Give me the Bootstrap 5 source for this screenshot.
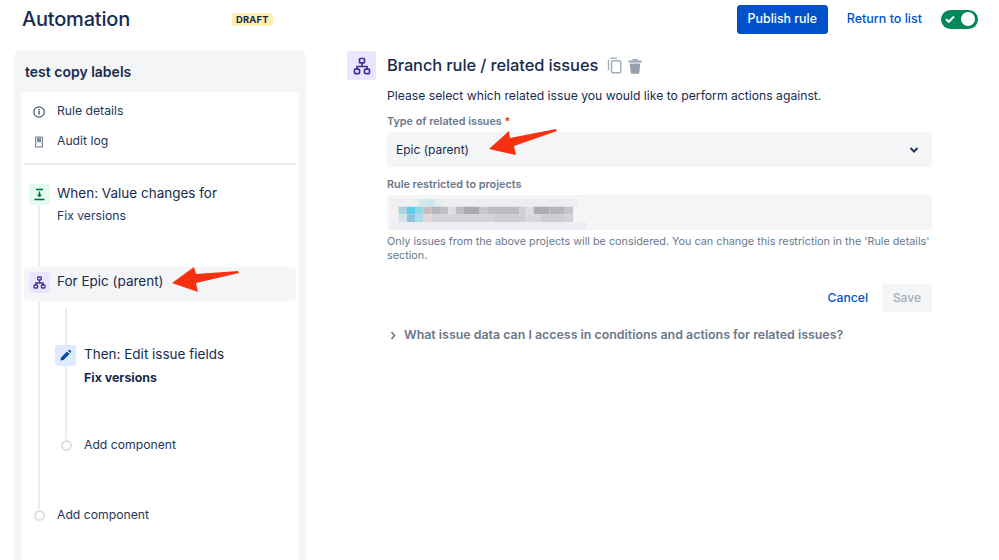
<!DOCTYPE html>
<html lang="en">
<head>
  <meta charset="UTF-8">
  <meta name="viewport" content="width=device-width, initial-scale=1.0">
  <title>Automation</title>
  <link href="https://cdn.jsdelivr.net/npm/bootstrap@5.3.3/dist/css/bootstrap.min.css" rel="stylesheet">
  <style>
    body { font-family: Inter, "Liberation Sans", sans-serif; color: #172b4d; height: 560px; overflow: hidden; position: relative; font-size: 12.2px; }
    .top-bar { height: 38px; padding: 0 21px 0 22px; }
    .page-title { font-size: 20px; font-weight: 500; line-height: 38px; margin: 0; width: 210px; letter-spacing: -.2px; }
    .draft-tag { background: #fff0b3; color: #172b4d; font-size: 9.4px; font-weight: 700; padding: 1px 4px; border-radius: 3px; letter-spacing: .2px; line-height: 11px; }
    .publish-btn { background: #0052cc; border-color: #0052cc; font-size: 12.4px; font-weight: 500; height: 29px; width: 91px; padding: 0; border-radius: 3px; }
    .back-link { color: #0052cc; font-size: 12.5px; font-weight: 500; text-decoration: none; margin: 0 19px; }
    .toggle-pill { width: 37px; height: 19px; border-radius: 10px; background: #00875a; padding: 0 3px; }
    .toggle-knob { width: 14px; height: 14px; background: #fff; border-radius: 50%; margin-left: auto; }
    .side-panel { width: 292px; margin: 13px 0 0 14px; height: 520px; background: #f4f5f7; border-radius: 6px; padding: 0 7px; flex: none; }
    .side-title { font-size: 14px; font-weight: 600; height: 41px; line-height: 41px; padding-left: 4px; }
    .side-card { background: #fff; border-radius: 6px; padding: 0 3px; height: 480px; position: relative; }
    .menu-row { height: 30px; padding-top: 9px; color: #253858; }
    .menu-row svg { margin: 0 12px 0 9px; flex: none; }
    .side-rule { height: 2px; background: #ebecf0; margin-top: 11px; }
    .step-icon { width: 21px; height: 21px; border-radius: 3px; flex: none; position: relative; z-index: 1; }
    .step-main { font-size: 13.5px; line-height: 18px; }
    .step-sub { line-height: 18px; margin-top: 5px; color: #253858; }
    .step-text { margin-left: 7px; }
    .step-when { padding: 19px 0 0 5px; height: 102px; }
    .step-branch { height: 34px; padding: 5px 0 0 5px; background: #f4f5f7; border-radius: 4px; position: relative; z-index: 1; }
    .step-then { padding: 44px 0 0 31px; height: 135px; }
    .then-sub { color: #172b4d; font-weight: 700; font-size: 12.4px; margin-top: 6px; }
    .step-add { color: #253858; height: 18px; }
    .add-inner { padding-left: 37px; }
    .add-outer { padding-left: 10px; margin-top: 52px; }
    .dot-mark { width: 11px; height: 11px; border: 2px solid #dfe1e6; border-radius: 50%; background: #fff; flex: none; position: relative; z-index: 1; margin-right: 12px; }
    .line-outer { position: absolute; left: 17px; top: 113px; width: 2px; height: 304px; background: #ebecf0; }
    .line-inner { position: absolute; left: 44px; top: 216px; width: 2px; height: 131px; background: #ebecf0; }
    .detail-pane { margin: 13px 0 0 41px; width: 585px; flex: none; }
    .head-icon { width: 29px; height: 29px; background: #eae6ff; border-radius: 3px; flex: none; margin-right: 11px; }
    .pane-title { font-size: 16.45px; font-weight: 500; margin: 0 9px 0 0; line-height: 29px; letter-spacing: -.1px; }
    .pane-body { padding-left: 40px; }
    .pane-intro { margin: 7px 0 0; line-height: 18px; color: #172b4d; }
    .field-label { font-size: 10.8px; font-weight: 600; color: #6b778c; margin: 10px 0 3px; line-height: 14px; display: block; }
    .field-label b { color: #de350b; font-weight: 600; }
    .field-box { background: #f4f5f7; border: 0; border-radius: 3px; height: 35px; padding: 1px 9px 0; font-size: 12px; color: #172b4d; }
    .field-help { font-size: 10.8px; color: #6b778c; line-height: 14px; margin-top: 5px; }
    .cancel-link { color: #0052cc; font-weight: 500; text-decoration: none; margin-right: 14px; }
    .btn.save-btn:disabled { background: #f4f5f7; color: #a5adba; border: 0; width: 50px; height: 28px; padding: 0; font-size: 12.2px; font-weight: 500; border-radius: 3px; opacity: 1; }
    .more-row { color: #6b778c; font-weight: 600; font-size: 12.4px; margin: 14px 0 0 3px; line-height: 18px; }
    .more-row svg { margin-right: 7px; }
    .arrow-mark { position: absolute; left: 0; top: 0; z-index: 5; pointer-events: none; }
  </style>
</head>
<body>
  <header class="top-bar d-flex align-items-center">
    <h1 class="page-title">Automation</h1>
    <span class="draft-tag">DRAFT</span>
    <button class="btn btn-primary publish-btn ms-auto" type="button">Publish rule</button>
    <a class="back-link" href="#">Return to list</a>
    <div class="toggle-pill d-flex align-items-center">
      <svg width="12" height="12" viewBox="0 0 12 12"><path d="M2 6.2l2.8 2.6L10 3.5" fill="none" stroke="#fff" stroke-width="2"/></svg>
      <div class="toggle-knob"></div>
    </div>
  </header>

  <div class="d-flex">
    <aside class="side-panel">
      <div class="side-title">test copy labels</div>
      <div class="side-card">
        <div class="menu-row d-flex align-items-center">
          <svg width="12" height="12" viewBox="0 0 12 12"><circle cx="6" cy="6" r="5.2" fill="none" stroke="#42526e" stroke-width="1.2"/><rect x="5.3" y="5" width="1.4" height="3.6" fill="#42526e"/><rect x="5.3" y="3" width="1.4" height="1.4" fill="#42526e"/></svg>
          Rule details
        </div>
        <div class="menu-row d-flex align-items-center">
          <svg width="12" height="12" viewBox="0 0 12 12"><rect x="2" y=".5" width="8" height="11" rx="1" fill="#7a869a"/><rect x="3.2" y="1.7" width="5.6" height="8.6" fill="#fff"/><rect x="4" y="2.2" width="4" height="4" fill="#7a869a"/></svg>
          Audit log
        </div>
        <div class="side-rule"></div>
        <div class="line-outer"></div>
        <div class="line-inner"></div>

        <div class="step-when d-flex">
          <div class="step-icon d-flex align-items-center justify-content-center" style="background:#e3fcef">
            <svg width="13" height="13" viewBox="0 0 13 13"><path d="M3 1.5h7M1.5 11.5h10" stroke="#006644" stroke-width="1.4"/><path d="M6.5 3.5v5" stroke="#006644" stroke-width="1.4"/><path d="M4 6.5h5l-2.5 2.8z" fill="#006644"/></svg>
          </div>
          <div class="step-text">
            <div class="step-main">When: Value changes for</div>
            <div class="step-sub">Fix versions</div>
          </div>
        </div>

        <div class="step-branch d-flex">
          <div class="step-icon d-flex align-items-center justify-content-center" style="background:#eae6ff">
            <svg width="13" height="13" viewBox="0 0 13 13"><g fill="none" stroke="#403294" stroke-width="1.3"><rect x="4.7" y="1" width="3.6" height="3" rx=".8"/><rect x="1" y="9" width="3.6" height="3" rx=".8"/><rect x="8.4" y="9" width="3.6" height="3" rx=".8"/><path d="M6.5 4v3M2.8 9V7h7.4v2"/></g></svg>
          </div>
          <div class="step-main step-text">For Epic (parent)</div>
        </div>

        <div class="step-then d-flex">
          <div class="step-icon d-flex align-items-center justify-content-center" style="background:#deebff">
            <svg width="13" height="13" viewBox="0 0 13 13"><path d="M1.5 11.5l.6-3 6-6 2.4 2.4-6 6z" fill="#0747a6"/><path d="M9 1.6l.7-.6a.8.8 0 0 1 1.1 0l1.2 1.2a.8.8 0 0 1 0 1.1l-.6.7z" fill="#0747a6"/></svg>
          </div>
          <div class="ms-2">
            <div class="step-main">Then: Edit issue fields</div>
            <div class="step-sub then-sub">Fix versions</div>
          </div>
        </div>

        <div class="step-add add-inner d-flex align-items-center"><span class="dot-mark"></span>Add component</div>
        <div class="step-add add-outer d-flex align-items-center"><span class="dot-mark"></span>Add component</div>
      </div>
    </aside>

    <main class="detail-pane">
      <div class="d-flex align-items-center">
        <div class="head-icon d-flex align-items-center justify-content-center">
          <svg width="18" height="18" viewBox="0 0 18 18"><g fill="none" stroke="#403294" stroke-width="1.7"><rect x="6.5" y="1.5" width="5" height="4.4" rx="1"/><rect x="1.5" y="12.2" width="5" height="4.4" rx="1"/><rect x="11.5" y="12.2" width="5" height="4.4" rx="1"/><path d="M9 6v3.5M4 12.2V9.5h10v2.7"/></g></svg>
        </div>
        <h2 class="pane-title">Branch rule / related issues</h2>
        <svg width="16" height="17" viewBox="0 0 16 17" class="me-1"><path d="M3.5 1.2H10" fill="none" stroke="#a5adba" stroke-width="1.4"/><path d="M1.5 3v10" fill="none" stroke="#a5adba" stroke-width="1.4"/><rect x="4.5" y="3.7" width="9.3" height="12" rx="1.2" fill="none" stroke="#a5adba" stroke-width="1.5"/></svg>
        <svg width="16" height="16" viewBox="0 0 16 16"><path d="M1.5 2.5h13v2h-13z" fill="#97a0af"/><path d="M5.5 1h5v1.500h-5z" fill="#97a0af"/><path d="M2.7 5.5h10.6l-1 9.5a1 1 0 0 1-1 .8H4.7a1 1 0 0 1-1-.8z" fill="#97a0af"/></svg>
      </div>
      <div class="pane-body">
        <p class="pane-intro">Please select which related issue you would like to perform actions against.</p>
        <label class="field-label">Type of related issues <b>*</b></label>
        <div class="field-box d-flex align-items-center justify-content-between">
          <span>Epic (parent)</span>
          <svg width="10" height="8" viewBox="0 0 10 8" class="me-1"><path d="M1.500 2l3.500 3.500L8.500 2" fill="none" stroke="#253858" stroke-width="2"/></svg>
        </div>
        <label class="field-label" style="margin-top:11px">Rule restricted to projects</label>
        <div class="field-box p-0 overflow-hidden">
          <svg width="200" height="35" viewBox="0 0 200 35" class="d-block">
            <g id="blur-cells"></g>
          </svg>
        </div>
        <div class="field-help">Only issues from the above projects will be considered. You can change this restriction in the 'Rule details' section.</div>
        <div class="d-flex justify-content-end align-items-center" style="margin-top:21px">
          <a class="cancel-link" href="#">Cancel</a>
          <button class="btn save-btn" type="button" disabled>Save</button>
        </div>
        <div class="more-row d-flex align-items-center">
          <svg width="7" height="9" viewBox="0 0 7 9"><path d="M1.500 1l3 3.500-3 3.500" fill="none" stroke="#6b778c" stroke-width="1.600"/></svg>
          What issue data can I access in conditions and actions for related issues?
        </div>
      </div>
    </main>
  </div>

  <svg class="arrow-mark" width="999" height="560" viewBox="0 0 999 560">
    <path d="M172 283 L194 267 L196 274 L238 271 L239 273 L196 283 L198 292 Z" fill="#f5310f"/>
    <path d="M489 149 L509 131 L510 138 L556 129 L557 131 L514 146 L516 155 Z" fill="#f5310f"/>
  </svg>

  <script>
    // mosaic over the hidden project name, rows of [x, width, colour]
    const faint = [[3,190,'#eceef1']];
    const rows = [
      [[3,27,'#eef0f3'],[30,8,'#d5e8ee'],[38,8,'#c7e6ee'],[46,8,'#e6ecef'],[54,130,'#eceef1']],
      [[3,8,'#f7eef0'],[11,8,'#a9d3e2'],[19,8,'#5fcbe8'],[27,8,'#92d8e6'],[35,8,'#c9bcbc'],[43,8,'#b4b6ba'],[51,8,'#c0c1c5'],[59,7,'#dcdde0'],[66,8,'#bcbdc1'],[74,15,'#a9aaae'],[89,8,'#c6c7ca'],[97,30,'#bcbdc1'],[127,7,'#cfd0d3'],[134,7,'#dcdde0'],[141,15,'#acadb1'],[156,15,'#b5b6b9'],[171,8,'#c4c5c8']],
      [[3,8,'#eef0f3'],[11,8,'#d6e2ea'],[19,8,'#8fc3dc'],[27,8,'#aadce6'],[35,8,'#e0d8da'],[43,60,'#d3d4d7'],[103,30,'#ccced1'],[133,15,'#d6d7da'],[148,23,'#cdced2'],[171,8,'#d2d3d6']],
      faint
    ];
    const cells = rows.map((row, i) => row.map(c =>
      `<rect x="${c[0] * 1.04}" y="${4 + i * 7.7}" width="${c[1] * 1.04}" height="7.7" fill="${c[2]}"/>`).join('')).join('');
    document.getElementById('blur-cells').innerHTML = cells;
  </script>
  <script src="https://cdn.jsdelivr.net/npm/bootstrap@5.3.3/dist/js/bootstrap.bundle.min.js"></script>
</body>
</html>
